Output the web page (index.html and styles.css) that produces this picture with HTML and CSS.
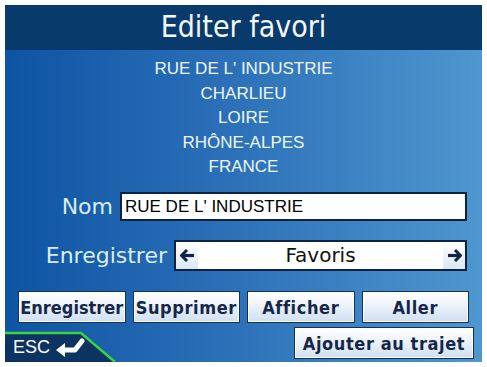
FILE: index.html
```html
<!DOCTYPE html>
<html lang="fr">
<head>
<meta charset="utf-8">
<title>Editer favori</title>
<link rel="stylesheet" href="styles.css">
</head>
<body>
<div class="screen">
  <header class="header">Editer favori</header>
  <main class="main">
    <div class="address">
      <div>RUE DE L' INDUSTRIE</div>
      <div>CHARLIEU</div>
      <div>LOIRE</div>
      <div>RHÔNE-ALPES</div>
      <div>FRANCE</div>
    </div>
    <div class="row row-nom">
      <span class="label">Nom</span>
      <div class="input">RUE DE L' INDUSTRIE</div>
    </div>
    <div class="row row-enr">
      <span class="label">Enregistrer</span>
      <div class="selector">
        <span class="sel-btn">
          <svg width="15" height="13" viewBox="0 0 15 13"><path d="M7 1 L1.5 6.5 L7 12" fill="none" stroke="#0f2448" stroke-width="3" stroke-linejoin="miter"/><path d="M2.5 6.5 H14" stroke="#0f2448" stroke-width="3.2"/></svg>
        </span>
        <span class="sel-value">Favoris</span>
        <span class="sel-btn">
          <svg width="15" height="13" viewBox="0 0 15 13"><path d="M8 1 L13.5 6.5 L8 12" fill="none" stroke="#0f2448" stroke-width="3" stroke-linejoin="miter"/><path d="M1 6.5 H12.5" stroke="#0f2448" stroke-width="3.2"/></svg>
        </span>
      </div>
    </div>
    <div class="buttons">
      <button class="btn btn-tight">Enregistrer</button>
      <button class="btn">Supprimer</button>
      <button class="btn">Afficher</button>
      <button class="btn">Aller</button>
    </div>
    <div class="bottom">
      <div class="esc">
        <svg class="esc-bg" width="114" height="31" viewBox="0 0 114 31"><path d="M0 2 H76 L110 31 H0 Z" fill="#0b3463"/><path d="M0 2 H76 L110 31" fill="none" stroke="#3fd23f" stroke-width="2.5"/></svg>
        <span class="esc-text">ESC</span>
        <svg class="esc-icon" width="30" height="19" viewBox="0 0 30 19"><path d="M1 12 L10 5 L10 19 Z" fill="#fff"/><path d="M8 12 H20 L27 3" fill="none" stroke="#fff" stroke-width="5" stroke-linejoin="round" stroke-linecap="round"/></svg>
      </div>
      <button class="btn btn-wide">Ajouter au trajet</button>
    </div>
  </main>
</div>
</body>
</html>
```
FILE: styles.css
```css
html, body {
  margin: 0;
  padding: 0;
  background: #ffffff;
}
body {
  width: 487px;
  height: 367px;
  overflow: hidden;
}
.screen {
  margin: 5px;
  width: 477px;
  height: 357px;
  display: flex;
  flex-direction: column;
  overflow: hidden;
}
.header {
  height: 45px;
  background: #083a6c;
  color: #f4f8fc;
  font-family: "DejaVu Sans Condensed", "DejaVu Sans", sans-serif;
  font-size: 30px;
  line-height: 44px;
  text-align: center;
}
.main {
  flex: 1;
  display: flex;
  flex-direction: column;
  background: linear-gradient(to right, #0d54a3 0%, #2a6fb7 45%, #4e97cf 100%);
}
.address {
  padding-top: 7px;
  color: #eef6fc;
  font-family: "Liberation Sans", Arial, sans-serif;
  font-size: 17px;
  line-height: 24.5px;
  text-align: center;
}
.row {
  display: flex;
  align-items: center;
  justify-content: flex-end;
  padding-right: 15px;
}
.label {
  color: #d9eefa;
  font-family: "DejaVu Sans", sans-serif;
  font-size: 22px;
  margin-right: 7px;
}
.row-nom {
  margin-top: 12.5px;
}
.input {
  width: 340px;
  height: 25px;
  border: 2px solid #10223f;
  background: #ffffff;
  color: #000;
  font-family: "Liberation Sans", Arial, sans-serif;
  font-size: 17px;
  line-height: 25px;
  padding-left: 3px;
  box-sizing: content-box;
}
.row-enr {
  margin-top: 19px;
}
.selector {
  width: 289px;
  height: 27px;
  border: 2px solid #10223f;
  background: #ffffff;
  display: flex;
  align-items: stretch;
}
.sel-btn {
  width: 22px;
  display: flex;
  align-items: center;
  justify-content: center;
  background: linear-gradient(to bottom, #ffffff 0%, #dbe8f5 100%);
}
.sel-value {
  flex: 1;
  text-align: center;
  color: #111;
  font-family: "DejaVu Sans", sans-serif;
  font-size: 20px;
  line-height: 27px;
}
.buttons {
  margin-top: 20px;
  padding: 0 13px;
  display: grid;
  grid-template-columns: repeat(4, 1fr);
  gap: 7px;
}
.btn {
  height: 32px;
  margin: 0;
  padding: 0;
  border: 1.5px solid #163058;
  background: linear-gradient(to bottom, #ffffff 0%, #eef4fb 40%, #cfdff1 100%);
  box-shadow: inset 0 0 0 1px #ffffff;
  color: #15264a;
  font-family: "DejaVu Sans Condensed", "DejaVu Sans", sans-serif;
  font-weight: bold;
  font-size: 18px;
  letter-spacing: 0.6px;
  white-space: nowrap;
  text-align: center;
}
.btn-tight {
  letter-spacing: 0;
}
.bottom {
  margin-top: 4px;
  display: flex;
  justify-content: space-between;
  align-items: flex-end;
  padding-right: 8px;
  flex: 1;
}
.btn-wide {
  width: 180px;
  margin-bottom: 3px;
}
.esc {
  position: relative;
  width: 114px;
  height: 31px;
  display: flex;
  align-items: center;
  padding-top: 2px;
  box-sizing: border-box;
}
.esc-bg {
  position: absolute;
  left: 0;
  top: 0;
}
.esc-text {
  position: relative;
  margin-left: 8px;
  color: #ffffff;
  font-family: "Liberation Sans", Arial, sans-serif;
  font-size: 18px;
}
.esc-icon {
  position: relative;
  margin-left: 5px;
}
```
